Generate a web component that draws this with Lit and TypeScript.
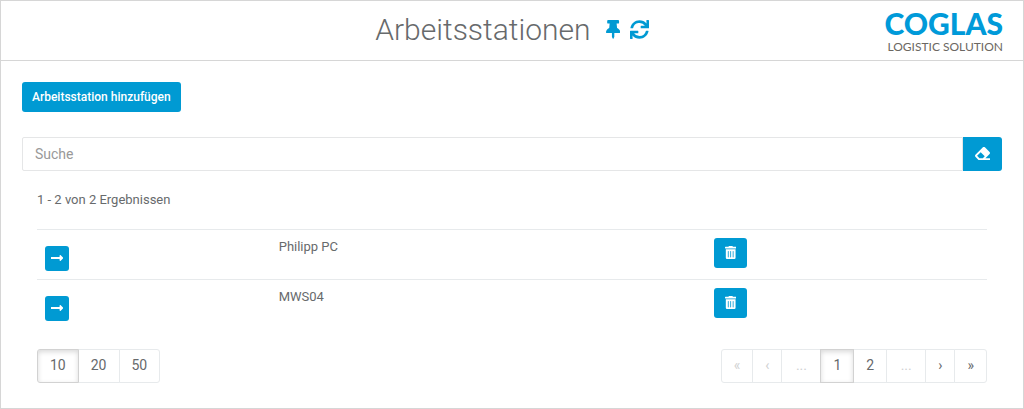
import { LitElement, html, css, svg } from "lit";
import { customElement, property, state } from "lit/decorators.js";
import { classMap } from "lit/directives/class-map.js";

const icons: Record<string, { width: number; path: string }> = {
  pin: {
    width: 384,
    path: "M298.028 214.267L285.793 96H328c13.255 0 24-10.745 24-24V24c0-13.255-10.745-24-24-24H56C42.745 0 32 10.745 32 24v48c0 13.255 10.745 24 24 24h42.207L85.972 214.267C37.465 236.82 0 277.261 0 328c0 13.255 10.745 24 24 24h136v104.007c0 1.242.289 2.467.845 3.578l24 48c2.941 5.882 11.364 5.893 14.311 0l24-48a8.008 8.008 0 0 0 .845-3.578V352h136c13.255 0 24-10.745 24-24-.001-51.183-37.983-91.42-85.973-113.733z",
  },
  refresh: {
    width: 512,
    path: "M440.65 12.57l4 82.77A247.16 247.16 0 0 0 255.83 8C134.73 8 33.91 94.92 12.29 209.82A12 12 0 0 0 24.09 224h49.05a12 12 0 0 0 11.67-9.26 175.91 175.91 0 0 1 317-56.94l-101.46-4.86a12 12 0 0 0-12.57 12v47.41a12 12 0 0 0 12 12H500a12 12 0 0 0 12-12V12a12 12 0 0 0-12-12h-47.37a12 12 0 0 0-11.98 12.57zM255.83 432a175.61 175.61 0 0 1-146-77.8l101.8 4.87a12 12 0 0 0 12.57-12v-47.4a12 12 0 0 0-12-12H12a12 12 0 0 0-12 12V500a12 12 0 0 0 12 12h47.35a12 12 0 0 0 12-12.6l-4.15-82.57A247.17 247.17 0 0 0 255.83 504c121.11 0 221.93-86.92 243.55-201.82a12 12 0 0 0-11.8-14.18h-49.05a12 12 0 0 0-11.67 9.26A175.86 175.86 0 0 1 255.83 432z",
  },
  eraser: {
    width: 512,
    path: "M497.941 273.941c18.745-18.745 18.745-49.137 0-67.882l-160-160c-18.745-18.745-49.136-18.746-67.883 0l-256 256c-18.745 18.745-18.745 49.137 0 67.882l96 96A48.004 48.004 0 0 0 144 480h356c6.627 0 12-5.373 12-12v-40c0-6.627-5.373-12-12-12H355.883l142.058-142.059zm-302.627-62.627l137.373 137.373L265.373 416H150.628l-80-80 124.686-124.686z",
  },
  arrow: {
    width: 448,
    path: "M313.941 216H12c-6.627 0-12 5.373-12 12v56c0 6.627 5.373 12 12 12h301.941v46.059c0 21.382 25.851 32.09 40.971 16.971l86.059-86.059c9.373-9.373 9.373-24.569 0-33.941l-86.059-86.059c-15.119-15.119-40.971-4.411-40.971 16.971V216z",
  },
  trash: {
    width: 448,
    path: "M32 464a48 48 0 0 0 48 48h288a48 48 0 0 0 48-48V128H32zm272-256a16 16 0 0 1 32 0v224a16 16 0 0 1-32 0zm-96 0a16 16 0 0 1 32 0v224a16 16 0 0 1-32 0zm-96 0a16 16 0 0 1 32 0v224a16 16 0 0 1-32 0zM432 32H312l-9.4-18.7A24 24 0 0 0 281.1 0H166.8a23.72 23.72 0 0 0-21.4 13.3L136 32H16A16 16 0 0 0 0 48v32a16 16 0 0 0 16 16h416a16 16 0 0 0 16-16V48a16 16 0 0 0-16-16z",
  },
};

@customElement("app-icon")
export class AppIcon extends LitElement {
  static styles = css`
    :host {
      display: inline-flex;
      padding-bottom: 1px;
    }
    .glyph {
      display: block;
      height: 1em;
      fill: currentColor;
    }
  `;

  @property() name = "pin";

  render() {
    const icon = icons[this.name];
    return html`<svg class="glyph" viewBox="0 0 ${icon.width} 512" aria-hidden="true">
      ${svg`<path d=${icon.path}></path>`}
    </svg>`;
  }
}

interface Segment {
  label: string;
  title?: string;
  active?: boolean;
  disabled?: boolean;
  gap?: boolean;
}

@customElement("button-group")
export class ButtonGroup extends LitElement {
  static styles = css`
    :host {
      display: flex;
    }
    .segment {
      box-sizing: border-box;
      height: 34px;
      margin: 0 0 0 -1px;
      padding: 0 12px 2px;
      border: 1px solid #e7eaec;
      background: #fff;
      color: #676a6c;
      font: 400 14px/20px Roboto, sans-serif;
      cursor: pointer;
    }
    .segment:first-child {
      margin-left: 0;
      border-radius: 3px 0 0 3px;
    }
    .segment:last-child {
      border-radius: 0 3px 3px 0;
    }
    .segment.active {
      position: relative;
      border-color: #d2d2d2;
      box-shadow: inset 0 2px 5px rgba(0, 0, 0, 0.15);
    }
    .segment.gap {
      min-width: 40px;
    }
    .segment:disabled {
      color: #d0d1d2;
      cursor: default;
    }
  `;

  @property({ attribute: false }) segments: Segment[] = [];

  render() {
    return this.segments.map(
      (s) => html`<button
        type="button"
        class=${classMap({ segment: true, active: !!s.active, gap: !!s.gap })}
        aria-label=${s.title ?? s.label}
        ?disabled=${s.disabled}
      >${s.label}</button>`
    );
  }
}

@customElement("app-root")
export class AppRoot extends LitElement {
  static styles = css`
    :host {
      display: block;
      box-sizing: border-box;
      min-height: 100vh;
      border: 1px solid #d6d6d6;
      background: #fff;
      color: #676a6c;
      font: 400 13px/18px Roboto, sans-serif;
    }
    .header {
      display: grid;
      grid-template-columns: 1fr auto 1fr;
      align-items: center;
      height: 59px;
      padding: 0 20px;
      border-bottom: 1px solid #d6d6d6;
    }
    .heading {
      display: flex;
      grid-column: 2;
      align-items: center;
      gap: 15px;
      padding-bottom: 1px;
    }
    .title {
      margin: 0;
      font-size: 30px;
      font-weight: 300;
      line-height: 36px;
    }
    .tools {
      display: flex;
      gap: 10px;
    }
    .tool {
      display: flex;
      padding: 0;
      border: 0;
      background: none;
      color: #009ad3;
      font-size: 19px;
      cursor: pointer;
    }
    .logo {
      justify-self: end;
      text-align: right;
      font-family: Lato, sans-serif;
      white-space: nowrap;
    }
    .brand {
      color: #009ad9;
      font-size: 30px;
      font-weight: 900;
      line-height: 32px;
    }
    .claim {
      color: #6b6762;
      font-size: 12px;
      line-height: 16px;
    }
    .content {
      padding: 21px;
    }
    .primary {
      display: inline-flex;
      box-sizing: border-box;
      align-items: center;
      justify-content: center;
      height: 30px;
      padding: 0 10px;
      border: 0;
      border-radius: 3px;
      background: #009ad3;
      color: #fff;
      font: 500 12px/18px Roboto, sans-serif;
      cursor: pointer;
    }
    .search {
      display: flex;
      margin-top: 25px;
    }
    .query {
      box-sizing: border-box;
      flex: 1;
      min-width: 0;
      height: 34px;
      padding: 0 12px;
      border: 1px solid #e5e6e7;
      border-radius: 2px 0 0 2px;
      color: inherit;
      font: 400 14px/20px Roboto, sans-serif;
    }
    .query::placeholder {
      color: #999;
      opacity: 1;
    }
    .clear {
      height: 34px;
      padding: 0 12px;
      border-radius: 0 3px 3px 0;
      font-size: 15px;
    }
    .results {
      padding: 20px 15px 0;
    }
    .summary {
      margin: 0;
    }
    .stations {
      width: 100%;
      margin: 20px 0;
      border-collapse: collapse;
      table-layout: fixed;
    }
    .go-column {
      width: 24.6%;
    }
    .name-column {
      width: 45.8%;
    }
    .cell {
      height: 33px;
      padding: 8px;
      border-top: 1px solid #e7eaec;
      text-align: left;
      vertical-align: top;
      font-weight: 400;
    }
    .open {
      width: 24px;
      height: 25px;
      margin-top: 8px;
      padding: 0;
      font-size: 14px;
    }
    .delete {
      width: 33px;
      padding: 0;
      font-size: 13px;
    }
    .pager {
      display: flex;
      flex-wrap: wrap;
      justify-content: space-between;
      gap: 12px;
    }
  `;

  @state() private stations = ["Philipp PC", "MWS04"];

  private sizes: Segment[] = [{ label: "10", active: true }, { label: "20" }, { label: "50" }];

  private pages: Segment[] = [
    { label: "«", title: "Erste Seite", disabled: true },
    { label: "‹", title: "Vorherige Seite", disabled: true },
    { label: "...", disabled: true, gap: true },
    { label: "1", active: true },
    { label: "2" },
    { label: "...", disabled: true, gap: true },
    { label: "›", title: "Nächste Seite" },
    { label: "»", title: "Letzte Seite" },
  ];

  render() {
    return html`
      <header class="header">
        <div class="heading">
          <h1 class="title">Arbeitsstationen</h1>
          <div class="tools">
            <button class="tool" type="button" aria-label="Anheften"><app-icon name="pin"></app-icon></button>
            <button class="tool" type="button" aria-label="Aktualisieren"><app-icon name="refresh"></app-icon></button>
          </div>
        </div>
        <div class="logo">
          <div class="brand">COGLAS</div>
          <div class="claim">LOGISTIC SOLUTION</div>
        </div>
      </header>
      <main class="content">
        <button class="primary" type="button">Arbeitsstation hinzufügen</button>
        <div class="search">
          <input class="query" type="text" placeholder="Suche" aria-label="Suche" />
          <button class="primary clear" type="button" aria-label="Suche leeren">
            <app-icon name="eraser"></app-icon>
          </button>
        </div>
        <section class="results">
          <p class="summary">1 - 2 von 2 Ergebnissen</p>
          <table class="stations">
            <colgroup>
              <col class="go-column" />
              <col class="name-column" />
              <col />
            </colgroup>
            <tbody>
              ${this.stations.map(
                (name) => html`<tr>
                  <td class="cell">
                    <button class="primary open" type="button" aria-label="${name} öffnen">
                      <app-icon name="arrow"></app-icon>
                    </button>
                  </td>
                  <th class="cell" scope="row">${name}</th>
                  <td class="cell">
                    <button class="primary delete" type="button" aria-label="${name} löschen">
                      <app-icon name="trash"></app-icon>
                    </button>
                  </td>
                </tr>`
              )}
            </tbody>
          </table>
          <div class="pager">
            <button-group .segments=${this.sizes}></button-group>
            <button-group .segments=${this.pages}></button-group>
          </div>
        </section>
      </main>
    `;
  }
}
